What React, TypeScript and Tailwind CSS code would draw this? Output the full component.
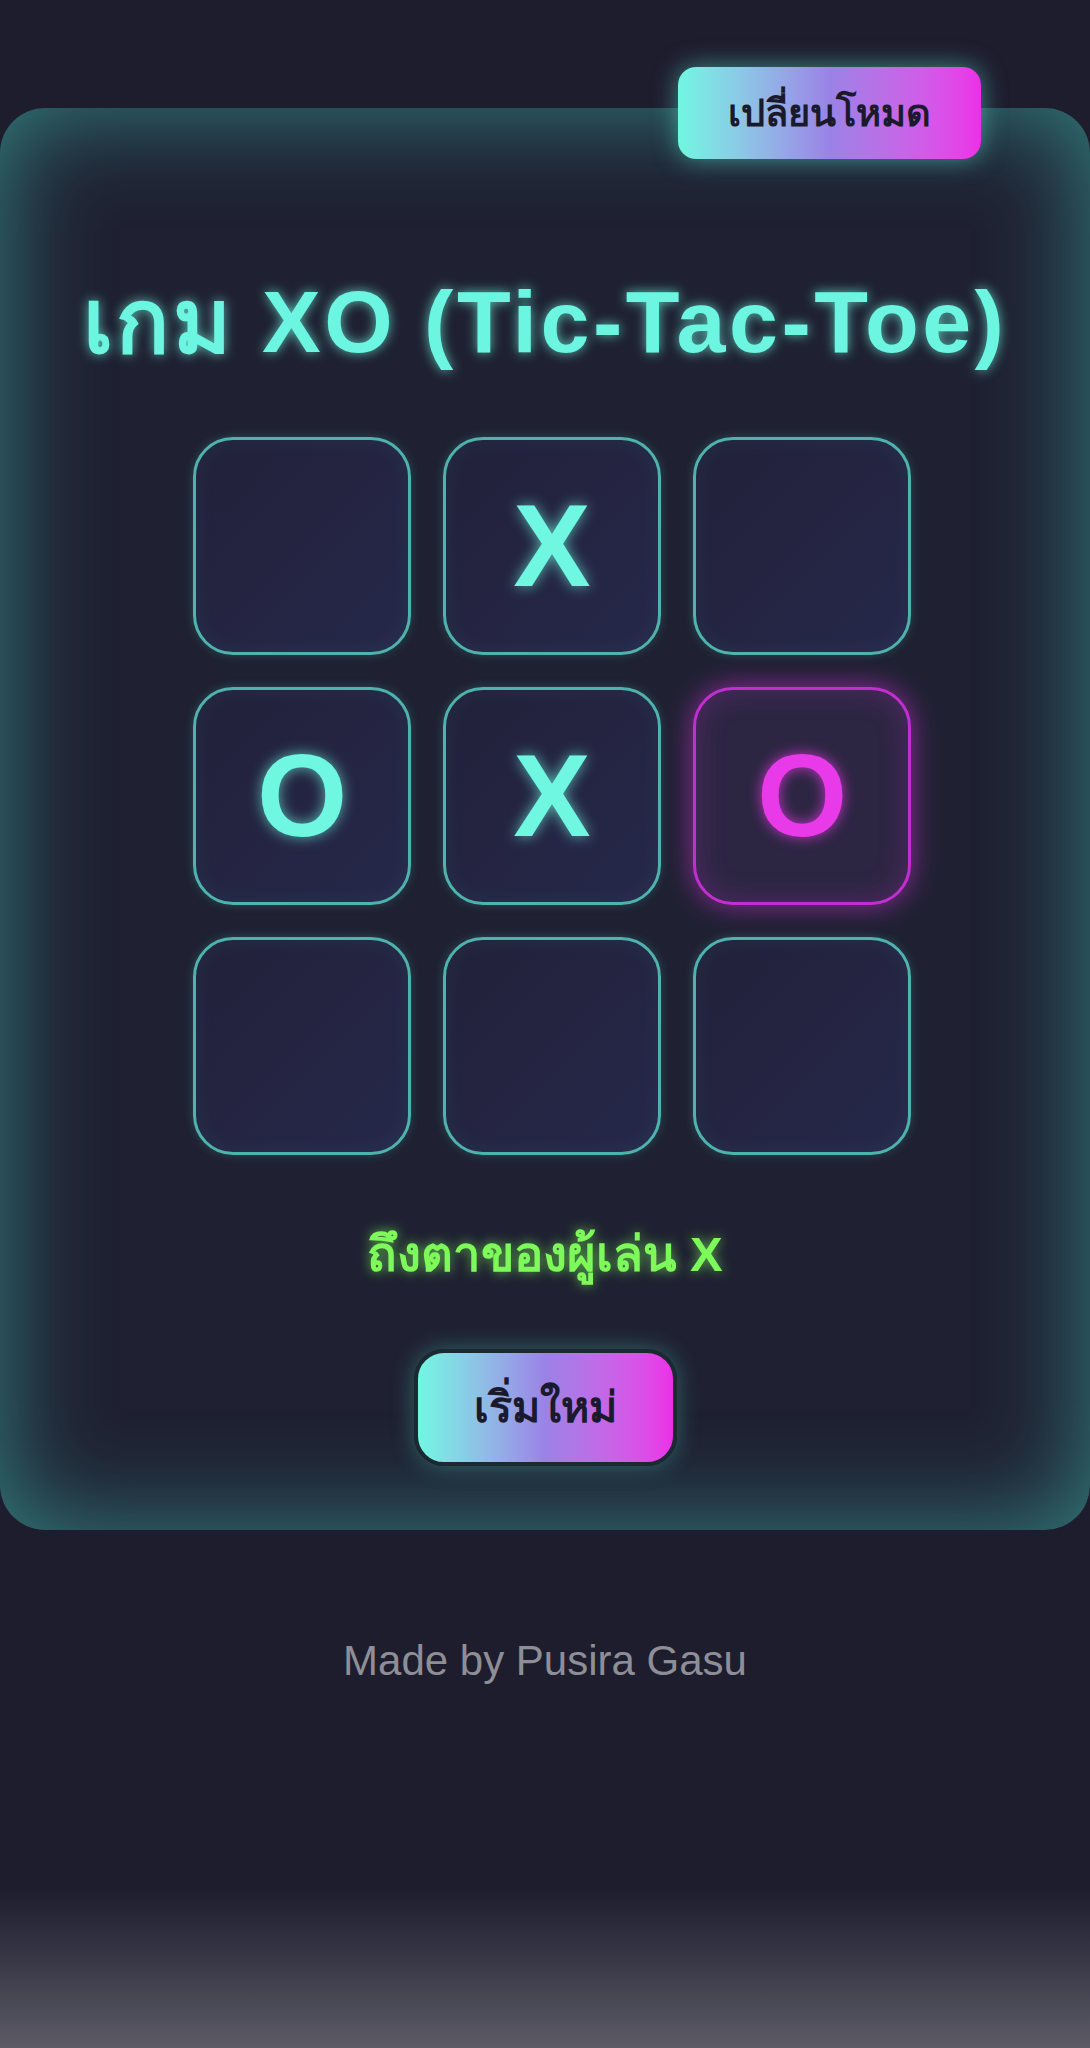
import React from "react";

const board: (string | null)[] = [null, "X", null, "O", "X", "O", null, null, null];

function Cell({ v, idx }: { v: string | null; idx: number }) {
  const magenta = idx === 5;
  return (
    <div
      className={
        magenta
          ? "w-[218px] h-[218px] rounded-[40px] border-[3px] border-[#c22fd0] bg-[#2c2642] shadow-[0_0_28px_rgba(220,50,230,0.6),inset_0_0_30px_rgba(220,50,230,0.22)] flex items-center justify-center"
          : "w-[218px] h-[218px] rounded-[40px] border-[3px] border-[#4fb3ad] bg-gradient-to-br from-[#22213a] to-[#26284a] shadow-[0_0_10px_rgba(80,200,190,0.25),inset_0_0_20px_rgba(80,200,190,0.08)] flex items-center justify-center"
      }
    >
      {v && (
        <span
          className={
            magenta
              ? "text-[116px] font-bold leading-none text-[#e93ae9] [text-shadow:0_0_14px_rgba(233,58,233,0.8)]"
              : "text-[116px] font-bold leading-none text-[#6ff7e2] [text-shadow:0_0_14px_rgba(111,247,226,0.7)]"
          }
          style={{ fontFamily: '"Liberation Sans", Arial, sans-serif' }}
        >
          {v}
        </span>
      )}
    </div>
  );
}

export default function App() {
  return (
    <div
      className="relative w-[1090px] min-h-[2048px] bg-[#1e1d2e] overflow-hidden flex flex-col items-center"
      style={{ fontFamily: '"Liberation Sans", Arial, "Noto Sans", sans-serif' }}
    >
      <div className="absolute inset-x-0 bottom-0 h-[160px] bg-gradient-to-b from-[#1e1d2e] to-[#5c5b66]" />

      <div className="relative mt-[108px] w-[1090px] h-[1422px] rounded-[45px] bg-[#1f2132] shadow-[inset_0_0_100px_rgba(70,210,195,0.55)] flex flex-col items-center pt-[170px]">
        <h1 className="text-[88px] font-bold leading-none tracking-[3.5px] text-[#6cf5e0] [text-shadow:0_0_12px_rgba(111,247,226,0.75)] h-[88px] whitespace-nowrap">
          เกม XO (Tic-Tac-Toe)
        </h1>

        <div className="mt-[71px] ml-[14px] grid grid-cols-3 gap-[32px]">
          {board.map((v, i) => (
            <Cell key={i} v={v} idx={i} />
          ))}
        </div>

        <div className="mt-[75px] h-[49px] text-[49px] font-bold leading-none text-[#7df95a] [text-shadow:0_0_12px_rgba(125,249,90,0.7)] whitespace-nowrap">
          ถึงตาของผู้เล่น X
        </div>

        <button className="mt-[70px] w-[263px] h-[117px] rounded-[30px] border-[4px] border-[#1b2a30] bg-gradient-to-r from-[#6ff7e2] via-[#9a82e6] to-[#ec2fe8] text-[43px] font-bold text-[#1a1a2c] shadow-[0_0_22px_rgba(80,220,200,0.35)] flex items-center justify-center">
          เริ่มใหม่
        </button>
      </div>

      <button className="absolute top-[67px] right-[109px] w-[303px] h-[92px] rounded-[18px] bg-gradient-to-r from-[#6ff7e2] via-[#9a82e6] to-[#ec2fe8] text-[38px] font-bold text-[#1a1a2c] shadow-[0_0_24px_rgba(90,230,210,0.55)] flex items-center justify-center">
        เปลี่ยนโหมด
      </button>

      <div className="mt-[110px] text-[42px] leading-none text-[#8e8e96] whitespace-nowrap">
        Made by Pusira Gasu
      </div>
    </div>
  );
}
